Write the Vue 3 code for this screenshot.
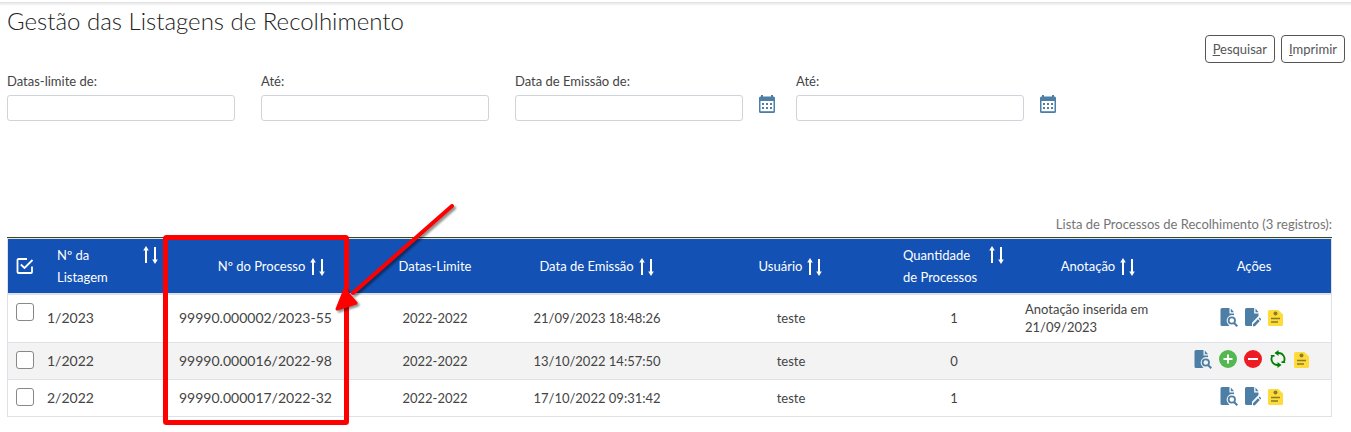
<script setup>
import { ref } from 'vue'

const columns = [
  { key: 'listagem', label: 'Nº da Listagem', sortable: true, wrap: true },
  { key: 'processo', label: 'Nº do Processo', sortable: true },
  { key: 'datas', label: 'Datas-Limite', sortable: false },
  { key: 'emissao', label: 'Data de Emissão', sortable: true },
  { key: 'usuario', label: 'Usuário', sortable: true },
  { key: 'quantidade', label: 'Quantidade de Processos', sortable: true, wrap: true },
  { key: 'anotacao', label: 'Anotação', sortable: true },
]

const rows = ref([
  { listagem: '1/2023', processo: '99990.000002/2023-55', datas: '2022-2022', emissao: '21/09/2023 18:48:26', usuario: 'teste', quantidade: '1', anotacao: 'Anotação inserida em 21/09/2023', actions: ['view', 'edit', 'note'], checked: false },
  { listagem: '1/2022', processo: '99990.000016/2022-98', datas: '2022-2022', emissao: '13/10/2022 14:57:50', usuario: 'teste', quantidade: '0', anotacao: '', actions: ['view', 'add', 'remove', 'refresh', 'note'], checked: false },
  { listagem: '2/2022', processo: '99990.000017/2022-32', datas: '2022-2022', emissao: '17/10/2022 09:31:42', usuario: 'teste', quantidade: '1', anotacao: '', actions: ['view', 'edit', 'note'], checked: false },
])

const fields = [
  { id: 'limite-de', label: 'Datas-limite de:', calendar: false },
  { id: 'limite-ate', label: 'Até:', calendar: false },
  { id: 'emissao-de', label: 'Data de Emissão de:', calendar: true },
  { id: 'emissao-ate', label: 'Até:', calendar: true },
]

const actionLabels = {
  view: 'Visualizar',
  edit: 'Editar',
  note: 'Anotação',
  add: 'Adicionar',
  remove: 'Remover',
  refresh: 'Atualizar',
}

function toggleAll() {
  const all = rows.value.every((r) => r.checked)
  rows.value.forEach((r) => (r.checked = !all))
}
</script>

<template>
  <main class="page">
    <div class="top-shadow"></div>
    <h1 class="title">Gestão das Listagens de Recolhimento</h1>

    <div class="commands">
      <button type="button" class="btn"><u>P</u>esquisar</button>
      <button type="button" class="btn"><u>I</u>mprimir</button>
    </div>

    <form class="filters" @submit.prevent>
      <div v-for="f in fields" :key="f.id" class="field" :class="{ dated: f.calendar }">
        <label :for="f.id">{{ f.label }}</label>
        <input :id="f.id" type="text" />
        <button v-if="f.calendar" type="button" class="icon-btn cal" aria-label="Selecionar data">
          <svg width="18" height="18" viewBox="0 0 18 18">
            <path fill="#4d7fa6" d="M3 0h2v1.500h8V0h2v1.500h.500A1.500 1.500 0 0 1 17 3v13.500a1.500 1.500 0 0 1-1.500 1.500h-13A1.500 1.500 0 0 1 1 16.500V3a1.500 1.500 0 0 1 1.500-1.500H3z" />
            <path fill="#fff" d="M2.500 6h13v10.200h-13z" />
            <path fill="#4d7fa6" d="M4 8h2v2H4zM8 8h2v2H8zM12 8h2v2h-2zM4 12h2v2H4zM8 12h2v2H8zM12 12h2v2h-2z" />
          </svg>
        </button>
      </div>
    </form>

    <div class="list">
      <table>
        <caption>Lista de Processos de Recolhimento (3 registros):</caption>
        <colgroup>
          <col class="c-check" />
          <col v-for="c in columns" :key="c.key" :class="'c-' + c.key" />
          <col class="c-acoes" />
        </colgroup>
        <thead>
          <tr>
            <th class="check-head">
              <button type="button" class="icon-btn" aria-label="Selecionar todos" @click="toggleAll">
                <svg width="18" height="18" viewBox="0 0 18 18" fill="none" stroke="#fff" stroke-width="1.800">
                  <path d="M11 2H2.500a1 1 0 0 0-1 1v12a1 1 0 0 0 1 1H15a1 1 0 0 0 1-1V9.500" />
                  <path d="M4.800 7.500L8.500 11L16.500 3" />
                </svg>
              </button>
            </th>
            <th v-for="c in columns" :key="c.key" scope="col">
              <div class="head" :class="{ wrap: c.wrap }">
                <span :class="'h-' + c.key">{{ c.label }}</span>
                <button v-if="c.sortable" type="button" class="icon-btn" :aria-label="'Ordenar por ' + c.label">
                  <svg width="16" height="18" viewBox="0 0 16 18">
                    <path fill="#fff" d="M3 0L5.800 4.500H4V17H2V4.500H.200zM11 1h2v12.500h1.800L12 18L9.200 13.500H11z" />
                  </svg>
                </button>
              </div>
            </th>
            <th scope="col">Ações</th>
          </tr>
        </thead>
        <tbody>
          <tr v-for="row in rows" :key="row.listagem">
            <td class="check-cell">
              <input v-model="row.checked" type="checkbox" :aria-label="'Selecionar ' + row.listagem" />
            </td>
            <td v-for="c in columns" :key="c.key" :class="'t-' + c.key">{{ row[c.key] }}</td>
            <td class="t-acoes">
              <div class="actions">
                <button v-for="a in row.actions" :key="a" type="button" class="icon-btn" :aria-label="actionLabels[a]">
                  <svg v-if="a === 'view'" width="18" height="19" viewBox="0 0 18 19">
                    <path fill="#4d7fa6" d="M2 0h7.500v5.500H14v1.700a5.600 5.600 0 0 0-6.200 8.600L9.500 18H2a1.500 1.500 0 0 1-1.500-1.500v-15A1.500 1.500 0 0 1 2 0z" />
                    <path fill="#4d7fa6" d="M10.800.500L14 4.200h-3.200z" />
                    <circle cx="11.800" cy="12.500" r="3.200" fill="none" stroke="#4d7fa6" stroke-width="1.800" />
                    <path d="M14 15l3.300 3.300" stroke="#4d7fa6" stroke-width="2" />
                  </svg>
                  <svg v-else-if="a === 'edit'" width="16" height="19" viewBox="0 0 16 19">
                    <path fill="#4d7fa6" d="M1.500 0h7.700v5.500h4.300v2.500L7 14.800V18H1.500A1.500 1.500 0 0 1 0 16.500v-15A1.500 1.500 0 0 1 1.500 0z" />
                    <path fill="#4d7fa6" d="M10.500.500L13.600 4.200h-3.100zM8 16.200l4.900-5 1.900 1.900-4.900 5.100H8zM13.600 10.500l1-.900 1.700 1.800-.900 1z" />
                  </svg>
                  <svg v-else-if="a === 'note'" width="15" height="17" viewBox="0 0 15 17">
                    <path fill="#fddb3a" d="M1.500 1h8.700L15 5.500v10A1.500 1.500 0 0 1 13.500 17h-12A1.500 1.500 0 0 1 0 15.500v-13A1.500 1.500 0 0 1 1.500 1z" />
                    <circle cx="7.500" cy="4.500" r="2" fill="#8b7b26" />
                    <path stroke="#8b7b26" stroke-width="1.500" d="M3 9.500h9M3 13h7" />
                  </svg>
                  <svg v-else-if="a === 'add'" width="18" height="18" viewBox="0 0 18 18">
                    <circle cx="9" cy="9" r="9" fill="#53b84f" />
                    <path stroke="#fff" stroke-width="2" d="M4.500 9h9M9 4.500v9" />
                  </svg>
                  <svg v-else-if="a === 'remove'" width="18" height="18" viewBox="0 0 18 18">
                    <circle cx="9" cy="9" r="9" fill="#ed1c24" />
                    <path stroke="#fff" stroke-width="2" d="M4 9h10" />
                  </svg>
                  <svg v-else width="18" height="18" viewBox="0 0 18 18">
                    <path fill="none" stroke="#008000" stroke-width="1.800" d="M8 3H9.500A6 6 0 0 1 14.800 11.800M10 15H8.500A6 6 0 0 1 3.200 6.200" />
                    <path fill="#008000" d="M5.500 3L9.500 0v6zM12.500 15L8.500 12v6zM1.500 5h4v1.800h-3zM16.500 13h-4v-1.800h3z" />
                  </svg>
                </button>
              </div>
            </td>
          </tr>
        </tbody>
      </table>

      <svg class="callout" width="310" height="232" viewBox="0 0 310 232" aria-hidden="true">
        <rect x="10.500" y="37.500" width="181" height="185" rx="1" fill="none" stroke="#f00" stroke-width="5" />
        <g class="arrow">
          <path d="M297 6L198 93" stroke="#f00" stroke-width="4" stroke-linecap="round" />
          <path d="M182 109L190 89L194 95L201 103Z" fill="#f00" stroke="#f00" stroke-width="3" stroke-linejoin="round" />
        </g>
      </svg>
    </div>
  </main>
</template>

<style>
body {
  margin: 0;
  background: #fff;
}
</style>

<style scoped>
.page {
  box-sizing: border-box;
  padding: 2px 0 15px 7px;
  font-family: Lato, "Open Sans", sans-serif;
  font-size: 13px;
  line-height: 18px;
  color: #444;
}
.top-shadow {
  height: 4px;
  margin-left: -7px;
  background: linear-gradient(#e0e0e0, #fff);
}
.title {
  margin: 0;
  color: #222;
  font-size: 24px;
  font-weight: 300;
  line-height: 29px;
}
.commands {
  display: flex;
  justify-content: flex-end;
  gap: 6px;
  padding-right: 6px;
}
.btn {
  height: 28px;
  padding: 0 7px;
  border: 1px solid #555;
  border-radius: 4px;
  background: #fff;
  color: #555;
  font: inherit;
}
.filters {
  display: flex;
  gap: 26px;
  margin-top: 9px;
}
.field {
  position: relative;
  flex: 0 1 228px;
  min-width: 0;
}
.field.dated {
  display: grid;
  grid-template-columns: minmax(0, 1fr) 18px;
  column-gap: 15px;
  flex-basis: 261px;
}
.field.dated + .field.dated {
  margin-left: -6px;
}
.field label {
  display: block;
  grid-column: 1 / -1;
  margin-bottom: 5px;
}
.field input {
  box-sizing: border-box;
  display: block;
  width: 100%;
  height: 26px;
  padding: 0 6px;
  border: 1px solid #ced4da;
  border-radius: 3px;
  font: inherit;
}
.icon-btn {
  display: inline-flex;
  padding: 0;
  border: 0;
  background: none;
  cursor: pointer;
}
.icon-btn svg {
  display: block;
}
.cal {
  align-self: start;
}
.list {
  position: relative;
  margin: 95px 20px 0 0;
}
table {
  table-layout: fixed;
  width: 100%;
  border-collapse: separate;
  border-spacing: 0;
  border: 1px solid #dee2e6;
}
caption {
  box-sizing: border-box;
  height: 22px;
  border-bottom: 1px solid #3a4a10;
  color: #757575;
  line-height: 16px;
  text-align: right;
}
.c-check { width: 34px; }
.c-listagem { width: 132px; }
.c-processo { width: 196px; }
.c-datas { width: 130px; }
.c-emissao { width: 194px; }
.c-usuario { width: 194px; }
.c-quantidade { width: 132px; }
.c-anotacao { width: 157px; }
.c-acoes { width: 154px; }
th {
  height: 54px;
  padding: 0;
  background: #1351b4;
  border-bottom: 2px solid #dee2e6;
  color: #fff;
  font-weight: 400;
  line-height: 22px;
  text-align: center;
}
.check-head .icon-btn {
  padding-top: 5px;
}
.head {
  display: flex;
  align-items: center;
  justify-content: center;
  gap: 5px;
}
.head .icon-btn {
  padding-top: 2px;
}
.head.wrap {
  align-items: flex-start;
  gap: 8px;
}
.h-listagem {
  width: 78px;
  text-align: left;
}
.h-quantidade {
  width: 78px;
  text-align: left;
}
td {
  box-sizing: border-box;
  height: 37px;
  padding: 0 5px;
  border-bottom: 1px solid #dee2e6;
  text-align: center;
}
tbody tr:first-child td {
  height: 48px;
}
tbody tr:first-child td:not(.check-cell) {
  padding-bottom: 2px;
}
tbody tr:last-child td {
  height: 36px;
  border-bottom: 0;
}
tbody tr:nth-child(even) {
  background: #f3f3f3;
}
.t-listagem,
.t-processo {
  font-size: 14px;
  text-align: left;
}
.t-anotacao {
  text-align: left;
}
.check-cell {
  padding: 8px 0 0 8px;
  vertical-align: top;
  text-align: left;
}
.check-cell input {
  appearance: none;
  display: block;
  box-sizing: border-box;
  width: 18px;
  height: 18px;
  margin: 0;
  border: 1px solid #888;
  border-radius: 3px;
  background: #fff;
}
.check-cell input:checked {
  background: #1351b4;
}
.t-acoes {
  padding-right: 10px;
  padding-bottom: 4px;
}
.actions {
  display: flex;
  align-items: center;
  justify-content: center;
  gap: 7px;
}
.callout {
  position: absolute;
  left: 148px;
  top: -16px;
  pointer-events: none;
}
.arrow {
  filter: drop-shadow(2px 2px 1px rgba(0, 0, 0, 0.45));
}
</style>
